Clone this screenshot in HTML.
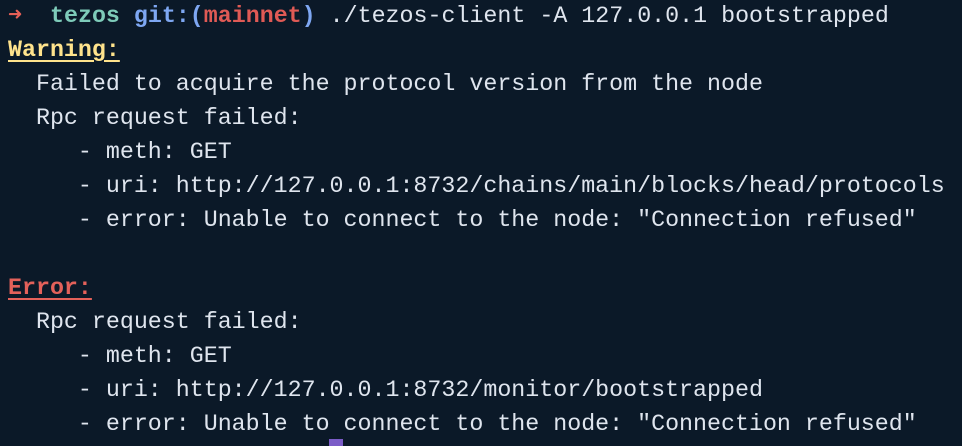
<!DOCTYPE html>
<html><head><style>
html,body{margin:0;padding:0;background:#0b1928;width:962px;height:446px;overflow:hidden}
pre{margin:0;position:absolute;left:8px;top:-1px;font-family:"Liberation Mono",monospace;font-size:23.3px;line-height:34px;color:#dfe5ee;white-space:pre}
.a{color:#e65f57}.t{color:#7ecbb9;font-weight:bold}.b{color:#7ea7f2;font-weight:bold}.r{color:#e05a55;font-weight:bold}
.y{color:#ffe38c;font-weight:bold;text-decoration:underline;text-underline-offset:4px}
.e{color:#e4615a;font-weight:bold;text-decoration:underline;text-underline-offset:4px}
.cur{position:absolute;left:329px;top:439px;width:14px;height:7px;background:#7b5cc7}
</style></head><body>
<pre><span class="a">➜</span>  <span class="t">tezos</span> <span class="b">git:(</span><span class="r">mainnet</span><span class="b">)</span> ./tezos-client -A 127.0.0.1 bootstrapped
<span class="y">Warning:</span>
  Failed to acquire the protocol version from the node
  Rpc request failed:
     - meth: GET
     - uri: http://127.0.0.1:8732/chains/main/blocks/head/protocols
     - error: Unable to connect to the node: "Connection refused"

<span class="e">Error:</span>
  Rpc request failed:
     - meth: GET
     - uri: http://127.0.0.1:8732/monitor/bootstrapped
     - error: Unable to connect to the node: "Connection refused"</pre>
<div class="cur"></div>
</body></html>
